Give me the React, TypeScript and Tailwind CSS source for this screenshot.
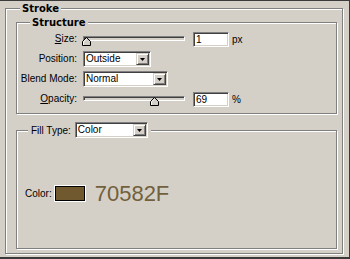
const sunken =
  "border border-t-[#808080] border-l-[#808080] border-b-white border-r-white shadow-[inset_1px_1px_0_#404040,inset_-1px_-1px_0_#d4d0c8]";
const raised =
  "border border-t-[#d4d0c8] border-l-[#d4d0c8] border-b-[#404040] border-r-[#404040] shadow-[inset_1px_1px_0_#fff,inset_-1px_-1px_0_#808080] bg-[#d4d0c8]";
const etched = "border border-[#808080] shadow-[1px_1px_0_#fff,inset_1px_1px_0_#fff]";

const Select = ({ value, width }: { value: string; width: string }) => (
  <div className={`${sunken} ${width} h-[16px] p-[1px] bg-white flex items-stretch`}>
    <span className="flex-1 pl-[1px] leading-[12px] text-[10px] text-black">{value}</span>
    <div className={`${raised} w-[13px] flex items-center justify-center`}>
      <svg width="5" height="3" viewBox="0 0 5 3">
        <polygon points="0,0 5,0 2.5,3" fill="#000" />
      </svg>
    </div>
  </div>
);

const Slider = ({ frac }: { frac: number }) => (
  <div className="relative w-[102px] h-[16px]">
    <div className={`${sunken} mt-[5px] h-[5px] bg-[#d4d0c8]`} />
    <svg
      className="absolute top-[6px]"
      style={{ left: Math.round(frac * 98) - 1 }}
      width="9"
      height="9"
      viewBox="0 0 9 9"
    >
      <polygon points="4.5,0.5 8.5,4.5 8.5,8.5 0.5,8.5 0.5,4.5" fill="#d4d0c8" stroke="#000" />
      <polyline points="1.5,8 1.5,4.9 4.5,1.9" fill="none" stroke="#fff" />
    </svg>
  </div>
);

const NumField = ({ value, unit }: { value: string; unit: string }) => (
  <>
    <div className={`${sunken} ml-[8px] w-[36px] h-[15px] bg-white pl-[2px] leading-[13px] text-[10px]`}>
      {value}
    </div>
    <span className="ml-[3px] text-[10px]">{unit}</span>
  </>
);

const Label = ({ children }: { children: React.ReactNode }) => (
  <span className="text-right text-[10px] leading-[16px] text-black">{children}</span>
);

export default function App() {
  return (
    <div className="w-[350px] h-[259px] bg-[#d4d0c8] border-t border-r border-b-2 border-[#3a3a3a] font-['Liberation_Sans',Arial,sans-serif] text-black overflow-hidden">
      <div className={`${etched} ml-[5px] mt-[7px] w-[338px] h-[246px]`}>
        <div className="-mt-[6px] ml-[14px] w-fit px-[2px] h-[12px] bg-[#d4d0c8] font-['DejaVu_Sans',sans-serif] font-bold text-[10px] leading-[12px]">
          Stroke
        </div>

        <div className={`${etched} ml-[10px] mt-[7px] w-[321px] h-[92px]`}>
          <div className="-mt-[6px] ml-[13px] w-fit px-[2px] h-[12px] bg-[#d4d0c8] font-['DejaVu_Sans',sans-serif] font-bold text-[10px] leading-[12px]">
            Structure
          </div>
          <div className="mt-[2px] grid grid-cols-[60px_1fr] gap-x-[6px] gap-y-[4px] auto-rows-[16px]">
            <Label>
              <span className="underline">S</span>ize:
            </Label>
            <div className="flex items-center">
              <Slider frac={0} />
              <NumField value="1" unit="px" />
            </div>

            <Label>Position:</Label>
            <div className="flex items-center">
              <Select value="Outside" width="w-[68px]" />
            </div>

            <Label>Blend Mode:</Label>
            <div className="flex items-center">
              <Select value="Normal" width="w-[85px]" />
            </div>

            <Label>
              <span className="underline">O</span>pacity:
            </Label>
            <div className="flex items-center">
              <Slider frac={0.69} />
              <NumField value="69" unit="%" />
            </div>
          </div>
        </div>

        <div className={`${etched} ml-[10px] mt-[16px] w-[321px] h-[119px]`}>
          <div className="-mt-[9px] ml-[11px] w-fit px-[3px] h-[16px] bg-[#d4d0c8] flex items-center gap-[4px]">
            <span className="text-[10px]">Fill Type:</span>
            <Select value="Color" width="w-[73px]" />
          </div>
          <div className="mt-[43px] pl-[8px] flex items-center h-[25px]">
            <span className="text-[10px]">Color:</span>
            <div className="ml-[3px] w-[30px] h-[15px] border border-black bg-[#70582F] shadow-[0_0_0_1px_#fff]" />
            <span className="ml-[10px] text-[22px] leading-[25px] text-[#72603c]">70582F</span>
          </div>
        </div>
      </div>
    </div>
  );
}
